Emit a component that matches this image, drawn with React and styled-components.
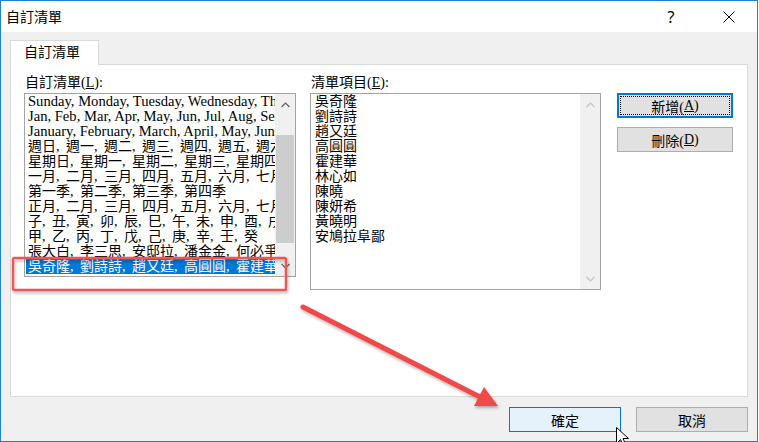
import React from "react";
import styled, { createGlobalStyle } from "styled-components";

const GlobalStyle = createGlobalStyle`
  html, body {
    margin: 0;
    padding: 0;
    background: #ffffff;
  }
  body {
    font-family: "Liberation Serif", "Noto Sans CJK TC", serif;
  }
`;

const LIST_FONT = `"Liberation Serif", "Noto Sans CJK TC", serif`;

const customLists = [
  "Sunday, Monday, Tuesday, Wednesday, Thursday, Friday, Saturday",
  "Jan, Feb, Mar, Apr, May, Jun, Jul, Aug, Sep, Oct, Nov, Dec",
  "January, February, March, April, May, June, July, August, September, October, November, December",
  "週日, 週一, 週二, 週三, 週四, 週五, 週六",
  "星期日, 星期一, 星期二, 星期三, 星期四, 星期五, 星期六",
  "一月, 二月, 三月, 四月, 五月, 六月, 七月, 八月, 九月, 十月, 十一月, 十二月",
  "第一季, 第二季, 第三季, 第四季",
  "正月, 二月, 三月, 四月, 五月, 六月, 七月, 八月, 九月, 十月, 十一月, 臘月",
  "子, 丑, 寅, 卯, 辰, 巳, 午, 未, 申, 酉, 戌, 亥",
  "甲, 乙, 丙, 丁, 戊, 己, 庚, 辛, 壬, 癸",
  "張大白, 李三思, 安邸拉, 潘金金, 何必爭",
  "吳奇隆, 劉詩詩, 趙又廷, 高圓圓, 霍建華, 林心如, 陳曉, 陳妍希, 黃曉明, 安鳩拉阜鄙",
];

const listEntries = [
  "吳奇隆",
  "劉詩詩",
  "趙又廷",
  "高圓圓",
  "霍建華",
  "林心如",
  "陳曉",
  "陳妍希",
  "黃曉明",
  "安鳩拉阜鄙",
];

const isCjk = (text) => /[\u4e00-\u9fff]/.test(text);

export default function App() {
  return (
    <>
      <GlobalStyle />
      <Screen>
        <Window>
          <TitleBar>
            <Title>自訂清單</Title>
            <CaptionButton>?</CaptionButton>
            <CaptionButton>
              <svg width="12" height="12" viewBox="0 0 12 12">
                <path d="M0.5 0.5 L11.5 11.5 M11.5 0.5 L0.5 11.5" stroke="#000" strokeWidth="1" />
              </svg>
            </CaptionButton>
          </TitleBar>

          <Body>
            <TabStrip>
              <Tab>自訂清單</Tab>
            </TabStrip>

            <Panel>
              <Column $width={272} $gap={14}>
                <FieldLabel>
                  自訂清單(<u>L</u>):
                </FieldLabel>
                <ListBox $height={184}>
                  <Items $indent={3}>
                    {customLists.map((text, index) => (
                      <Item
                        key={index}
                        $latin={!isCjk(text)}
                        $cjk={isCjk(text)}
                        $selected={index === customLists.length - 1}
                      >
                        {text}
                      </Item>
                    ))}
                  </Items>
                  <ScrollBar>
                    <ArrowButton>
                      <Chevron up />
                    </ArrowButton>
                    <Track>
                      <Thumb />
                    </Track>
                    <ArrowButton>
                      <Chevron />
                    </ArrowButton>
                  </ScrollBar>
                </ListBox>
              </Column>

              <Column $width={291} $gap={16}>
                <FieldLabel>
                  清單項目(<u>E</u>):
                </FieldLabel>
                <ListBox $height={197}>
                  <Items $indent={4}>
                    {listEntries.map((text, index) => (
                      <Item key={index}>{text}</Item>
                    ))}
                  </Items>
                  <ScrollBar>
                    <ArrowButton>
                      <Chevron up disabled />
                    </ArrowButton>
                    <Track />
                    <ArrowButton>
                      <Chevron disabled />
                    </ArrowButton>
                  </ScrollBar>
                </ListBox>
              </Column>

              <SideButtons>
                <Button $focused>
                  <FocusRing>
                    新增(<u>A</u>)
                  </FocusRing>
                </Button>
                <Button>
                  刪除(<u>D</u>)
                </Button>
              </SideButtons>
            </Panel>

            <Footer>
              <Button $width={112} $hover>
                確定
              </Button>
              <Button $width={112}>取消</Button>
            </Footer>
          </Body>
        </Window>

        <Annotations width="759" height="442" viewBox="0 0 759 442">
          <defs>
            <filter id="shadow" x="-10%" y="-10%" width="130%" height="140%">
              <feDropShadow dx="1" dy="2" stdDeviation="1.5" floodColor="#000" floodOpacity="0.3" />
            </filter>
          </defs>
          <rect
            x="13"
            y="258"
            width="273"
            height="32"
            rx="1.5"
            fill="none"
            stroke="#ef5454"
            strokeWidth="2.4"
            filter="url(#shadow)"
          />
          <g filter="url(#shadow)">
            <line
              x1="303"
              y1="307"
              x2="480"
              y2="397"
              stroke="#ef4848"
              strokeWidth="5"
              strokeLinecap="round"
            />
            <polygon points="498,406 474,406 484,387" fill="#ef4848" />
          </g>
          <path
            d="M616.5 427.5 L616.5 443.5 L620.5 439.5 L623.5 446 L626 445 L623 438.5 L628.5 438.5 Z"
            fill="#fff"
            stroke="#000"
            strokeWidth="1"
          />
        </Annotations>
      </Screen>
    </>
  );
}

function Chevron({ up, disabled }) {
  return (
    <svg width="9" height="6" viewBox="0 0 9 6">
      <polyline
        points={up ? "0.5,5 4.5,1 8.5,5" : "0.5,1 4.5,5 8.5,1"}
        fill="none"
        stroke={disabled ? "#c2c2c2" : "#606060"}
        strokeWidth="1.2"
      />
    </svg>
  );
}

const Screen = styled.div`
  position: relative;
  width: 759px;
  height: 442px;
  overflow: hidden;
  background: #ffffff;
`;

const Window = styled.div`
  width: 758px;
  height: 442px;
  box-sizing: border-box;
  border: 1px solid #1883d7;
  background: #f0f0f0;
  display: flex;
  flex-direction: column;
`;

const TitleBar = styled.div`
  height: 31px;
  flex-shrink: 0;
  background: #ffffff;
  display: flex;
  align-items: center;
  gap: 12px;
  padding: 0 5px 0 5px;
`;

const Title = styled.div`
  flex: 1;
  font-family: "Noto Sans CJK TC", sans-serif;
  font-size: 14px;
  line-height: 31px;
  color: #000;
`;

const CaptionButton = styled.div`
  width: 46px;
  height: 31px;
  display: flex;
  align-items: center;
  justify-content: center;
  font-family: "Noto Sans", sans-serif;
  font-size: 16px;
  color: #000;
`;

const Body = styled.div`
  flex: 1;
  min-height: 0;
  display: flex;
  flex-direction: column;
  padding: 8px 9px 9px 9px;
`;

const TabStrip = styled.div`
  display: flex;
  height: 24px;
  flex-shrink: 0;
`;

const Tab = styled.div`
  position: relative;
  z-index: 1;
  width: 89px;
  height: 25px;
  box-sizing: border-box;
  border: 1px solid #d9d9d9;
  border-bottom: none;
  background: #ffffff;
  padding-left: 13px;
  font-family: ${LIST_FONT};
  font-size: 14px;
  line-height: 24px;
  color: #000;
`;

const Panel = styled.div`
  flex: 1;
  min-height: 0;
  display: flex;
  align-items: flex-start;
  background: #ffffff;
  border: 1px solid #d9d9d9;
  padding: 10px 0 0 13px;
`;

const Column = styled.div`
  width: ${(p) => p.$width}px;
  margin-right: ${(p) => p.$gap}px;
  display: flex;
  flex-direction: column;
  gap: 2px;
`;

const FieldLabel = styled.div`
  font-family: ${LIST_FONT};
  font-size: 14px;
  line-height: 16px;
  color: #000;
  padding-left: 1px;
`;

const ListBox = styled.div`
  height: ${(p) => p.$height}px;
  box-sizing: border-box;
  border: 1px solid #a3a3a3;
  background: #ffffff;
  display: flex;
`;

const Items = styled.div`
  flex: 1;
  min-width: 0;
  overflow: hidden;
  padding-left: ${(p) => p.$indent - 2}px;
`;

const Item = styled.div`
  height: 15px;
  padding-left: 2px;
  font-family: ${LIST_FONT};
  font-size: ${(p) => (p.$latin ? "14.6px" : "14px")};
  line-height: 15px;
  word-spacing: ${(p) => (p.$cjk ? "3px" : "0")};
  white-space: nowrap;
  overflow: hidden;
  color: ${(p) => (p.$selected ? "#ffffff" : "#000000")};
  background: ${(p) => (p.$selected ? "#0078d7" : "transparent")};
`;

const ScrollBar = styled.div`
  width: 20px;
  flex-shrink: 0;
  background: #f0f0f0;
  display: flex;
  flex-direction: column;
`;

const ArrowButton = styled.div`
  height: 21px;
  flex-shrink: 0;
  display: flex;
  align-items: center;
  justify-content: center;
`;

const Track = styled.div`
  flex: 1;
  padding: 20px 1px 0 1px;
`;

const Thumb = styled.div`
  height: 108px;
  background: #cdcdcd;
`;

const SideButtons = styled.div`
  margin-top: 18px;
  display: flex;
  flex-direction: column;
  gap: 9px;
`;

const Button = styled.div`
  width: ${(p) => p.$width || 116}px;
  height: 25px;
  box-sizing: border-box;
  display: flex;
  align-items: center;
  justify-content: center;
  border: ${(p) => (p.$focused ? "2px solid #0078d7" : p.$hover ? "1px solid #0078d7" : "1px solid #adadad")};
  background: ${(p) => (p.$hover ? "#e5f1fb" : "#e1e1e1")};
  padding: ${(p) => (p.$focused ? "1px" : "0")};
  font-family: ${LIST_FONT};
  font-size: 14px;
  color: #000;
`;

const FocusRing = styled.div`
  align-self: stretch;
  flex: 1;
  display: flex;
  align-items: center;
  justify-content: center;
  border: 1px dotted #000;
`;

const Footer = styled.div`
  display: flex;
  justify-content: flex-end;
  gap: 15px;
  padding-top: 10px;
`;

const Annotations = styled.svg`
  position: absolute;
  left: 0;
  top: 0;
  pointer-events: none;
`;
